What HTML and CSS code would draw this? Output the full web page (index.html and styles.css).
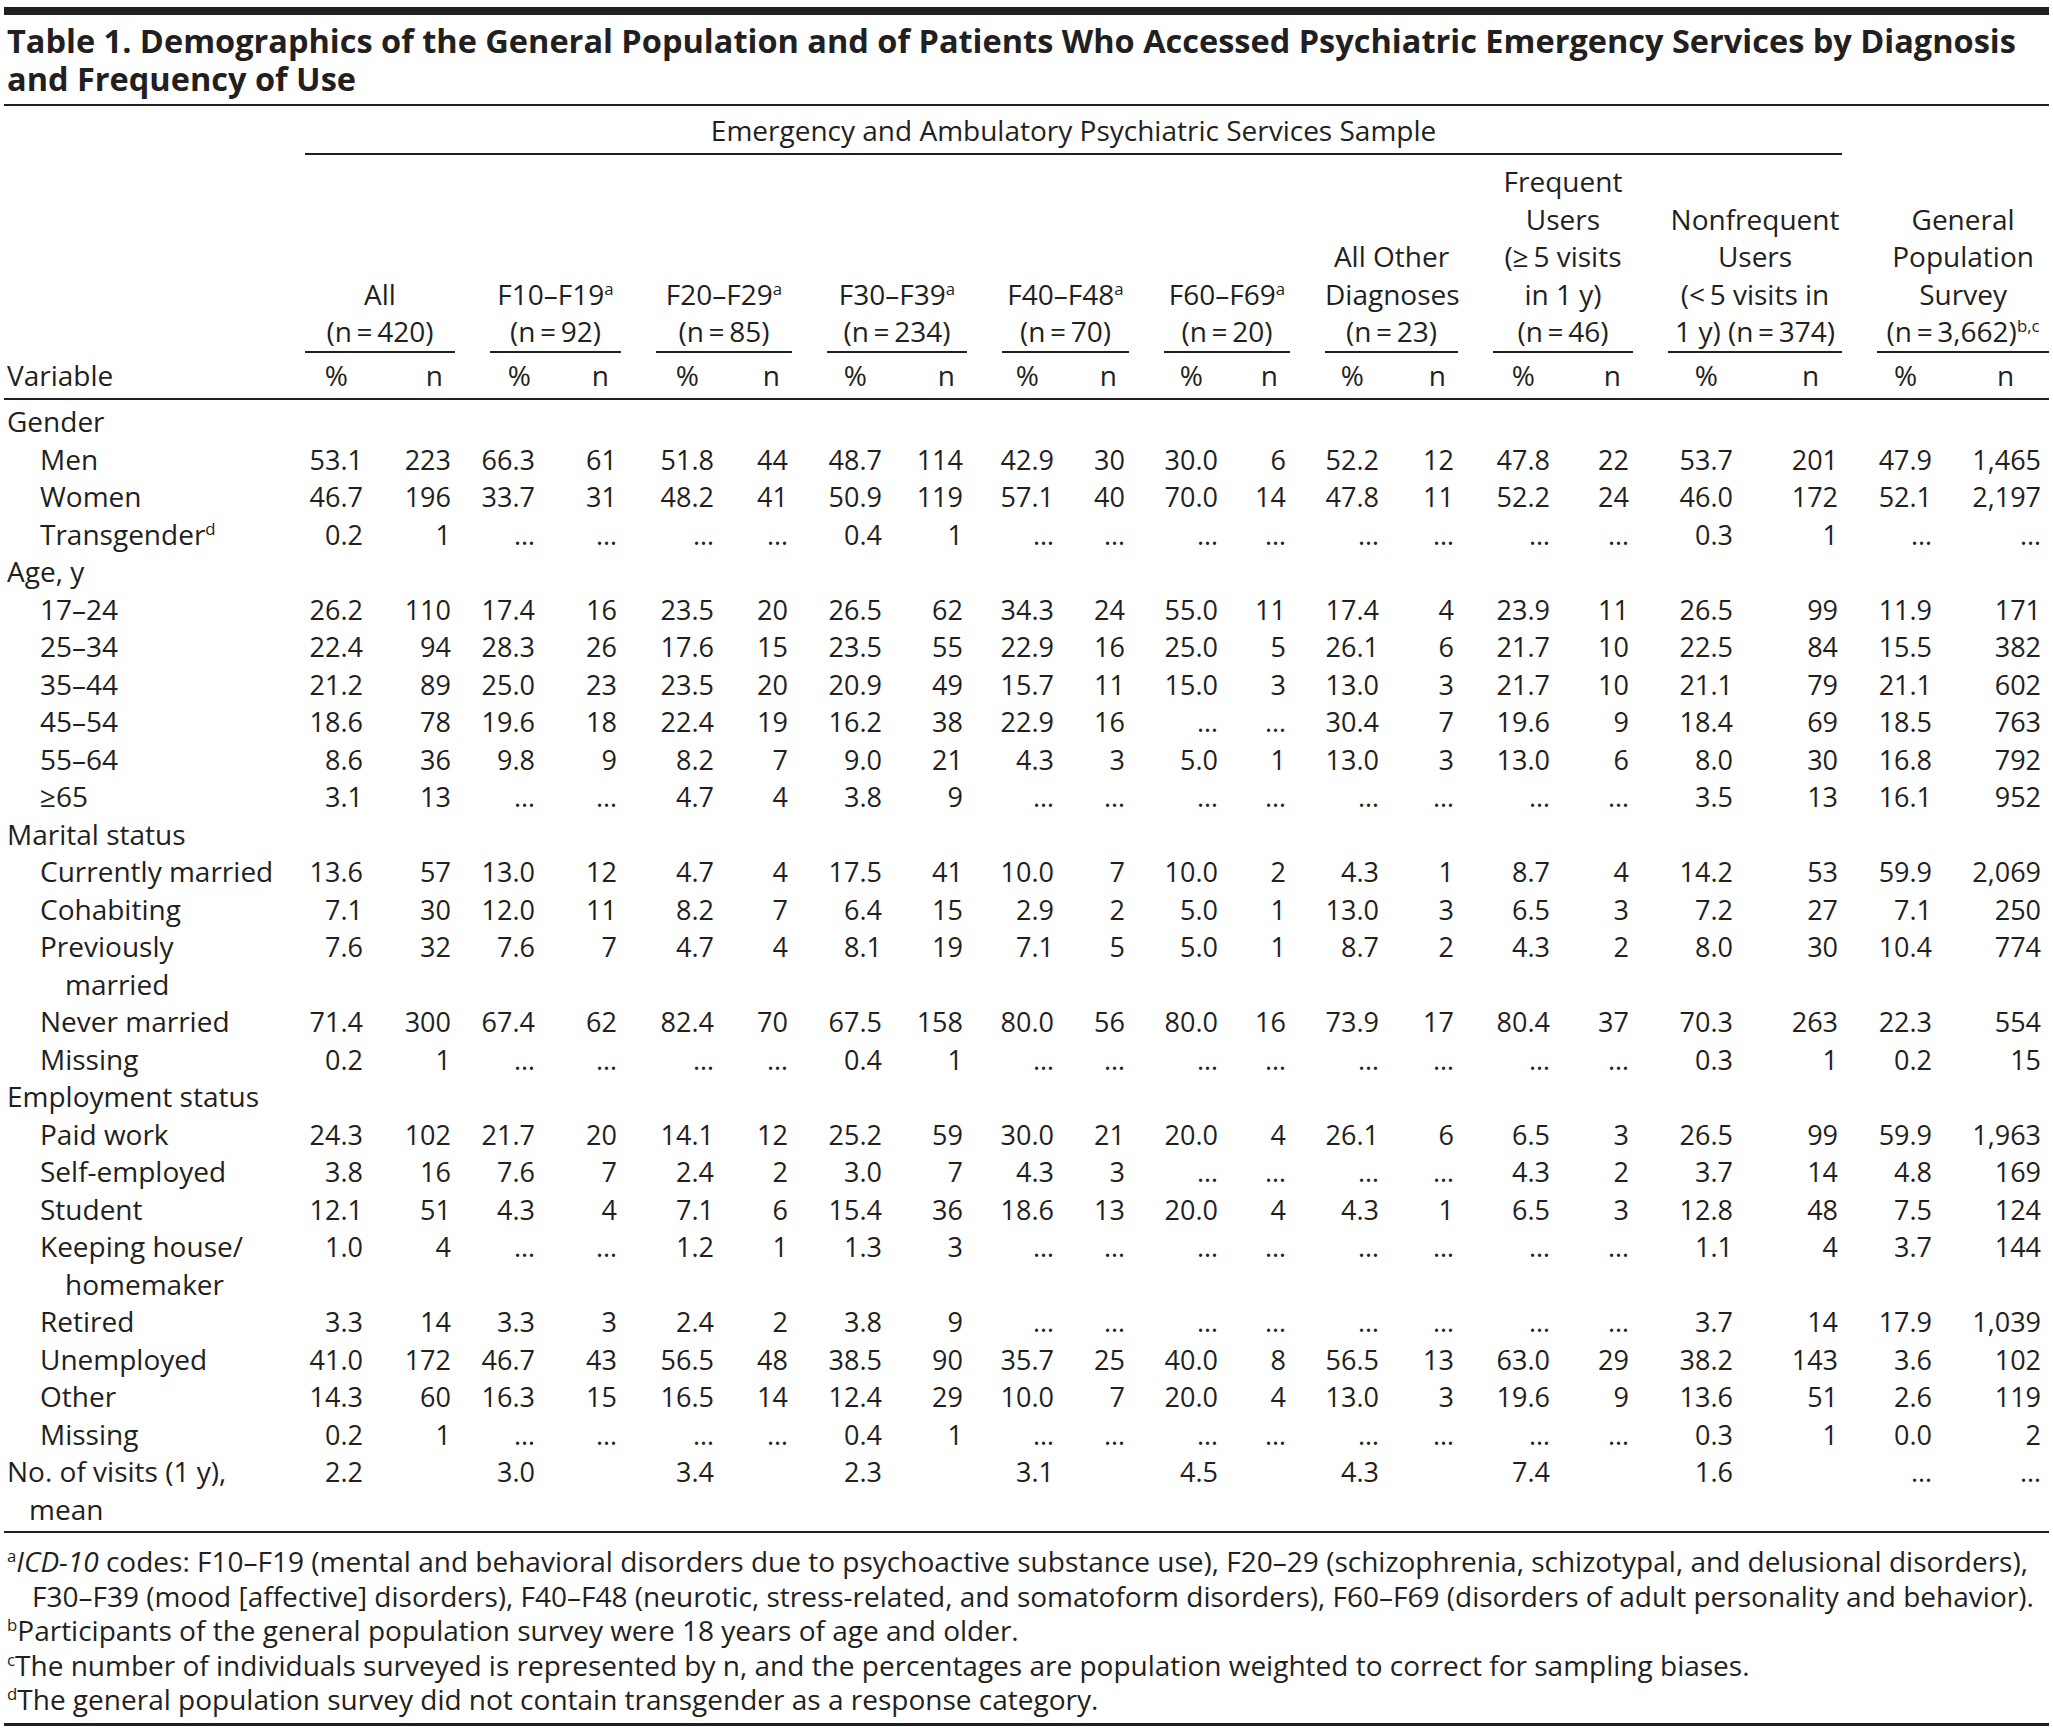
FILE: index.html
```html
<!DOCTYPE html>
<html lang="en">
<head>
<meta charset="utf-8">
<title>Table 1. Demographics</title>
<link rel="stylesheet" href="styles.css">
</head>
<body>
<div class="page">
  <div class="topbar"></div>
  <h1 class="title"><span class="tl">Table 1. Demographics of the General Population and of Patients Who Accessed Psychiatric Emergency Services by Diagnosis</span><span class="tl">and Frequency of Use</span></h1>
  <table class="data">
    <colgroup>
      <col class="c-l">
      <col class="c-p1"><col class="c-n1">
      <col class="c-p2"><col class="c-n2">
      <col class="c-p3"><col class="c-n3">
      <col class="c-p4"><col class="c-n4">
      <col class="c-p5"><col class="c-n5">
      <col class="c-p6"><col class="c-n6">
      <col class="c-p7"><col class="c-n7">
      <col class="c-p8"><col class="c-n8">
      <col class="c-p9"><col class="c-n9">
      <col class="c-p10"><col class="c-n10">
    </colgroup>
    <thead>
      <tr class="r-span">
        <th></th>
        <th colspan="18" class="span">Emergency and Ambulatory Psychiatric Services Sample</th>
        <th colspan="2"></th>
      </tr>
      <tr class="r-grp">
        <th></th>
        <th colspan="2" class="gh gh0"><div class="ghd">All<br>(n&#8201;=&#8201;420)</div></th>
        <th colspan="2" class="gh"><div class="ghd">F10–F19<sup>a</sup><br>(n&#8201;=&#8201;92)</div></th>
        <th colspan="2" class="gh"><div class="ghd">F20–F29<sup>a</sup><br>(n&#8201;=&#8201;85)</div></th>
        <th colspan="2" class="gh"><div class="ghd">F30–F39<sup>a</sup><br>(n&#8201;=&#8201;234)</div></th>
        <th colspan="2" class="gh"><div class="ghd">F40–F48<sup>a</sup><br>(n&#8201;=&#8201;70)</div></th>
        <th colspan="2" class="gh"><div class="ghd">F60–F69<sup>a</sup><br>(n&#8201;=&#8201;20)</div></th>
        <th colspan="2" class="gh"><div class="ghd">All Other<br>Diagnoses<br>(n&#8201;=&#8201;23)</div></th>
        <th colspan="2" class="gh"><div class="ghd">Frequent<br>Users<br>(≥&#8201;5 visits<br>in 1 y)<br>(n&#8201;=&#8201;46)</div></th>
        <th colspan="2" class="gh"><div class="ghd">Nonfrequent<br>Users<br>(&lt;&#8201;5 visits in<br>1 y) (n&#8201;=&#8201;374)</div></th>
        <th colspan="2" class="gh"><div class="ghd">General<br>Population<br>Survey<br>(n&#8201;=&#8201;3,662)<sup>b,c</sup></div></th>
      </tr>
      <tr class="r-var">
        <th class="vl">Variable</th>
        <th class="ph">%</th><th class="nh">n</th>
        <th class="ph ph2">%</th><th class="nh">n</th>
        <th class="ph">%</th><th class="nh">n</th>
        <th class="ph">%</th><th class="nh">n</th>
        <th class="ph">%</th><th class="nh">n</th>
        <th class="ph">%</th><th class="nh">n</th>
        <th class="ph">%</th><th class="nh">n</th>
        <th class="ph">%</th><th class="nh">n</th>
        <th class="ph">%</th><th class="nh nh9">n</th>
        <th class="ph">%</th><th class="nh nh10">n</th>
      </tr>
    </thead>
    <tbody>
      <tr class="first"><td class="l">Gender</td></tr>
      <tr><td class="l1">Men</td><td class="p">53.1</td><td class="n">223</td><td class="p">66.3</td><td class="n">61</td><td class="p">51.8</td><td class="n">44</td><td class="p">48.7</td><td class="n">114</td><td class="p">42.9</td><td class="n">30</td><td class="p">30.0</td><td class="n">6</td><td class="p">52.2</td><td class="n">12</td><td class="p">47.8</td><td class="n">22</td><td class="p">53.7</td><td class="n">201</td><td class="p">47.9</td><td class="n nl">1,465</td></tr>
      <tr><td class="l1">Women</td><td class="p">46.7</td><td class="n">196</td><td class="p">33.7</td><td class="n">31</td><td class="p">48.2</td><td class="n">41</td><td class="p">50.9</td><td class="n">119</td><td class="p">57.1</td><td class="n">40</td><td class="p">70.0</td><td class="n">14</td><td class="p">47.8</td><td class="n">11</td><td class="p">52.2</td><td class="n">24</td><td class="p">46.0</td><td class="n">172</td><td class="p">52.1</td><td class="n nl">2,197</td></tr>
      <tr><td class="l1">Transgender<sup>d</sup></td><td class="p">0.2</td><td class="n">1</td><td class="p">…</td><td class="n">…</td><td class="p">…</td><td class="n">…</td><td class="p">0.4</td><td class="n">1</td><td class="p">…</td><td class="n">…</td><td class="p">…</td><td class="n">…</td><td class="p">…</td><td class="n">…</td><td class="p">…</td><td class="n">…</td><td class="p">0.3</td><td class="n">1</td><td class="p">…</td><td class="n nl">…</td></tr>
      <tr><td class="l">Age, y</td></tr>
      <tr><td class="l1">17–24</td><td class="p">26.2</td><td class="n">110</td><td class="p">17.4</td><td class="n">16</td><td class="p">23.5</td><td class="n">20</td><td class="p">26.5</td><td class="n">62</td><td class="p">34.3</td><td class="n">24</td><td class="p">55.0</td><td class="n">11</td><td class="p">17.4</td><td class="n">4</td><td class="p">23.9</td><td class="n">11</td><td class="p">26.5</td><td class="n">99</td><td class="p">11.9</td><td class="n nl">171</td></tr>
      <tr><td class="l1">25–34</td><td class="p">22.4</td><td class="n">94</td><td class="p">28.3</td><td class="n">26</td><td class="p">17.6</td><td class="n">15</td><td class="p">23.5</td><td class="n">55</td><td class="p">22.9</td><td class="n">16</td><td class="p">25.0</td><td class="n">5</td><td class="p">26.1</td><td class="n">6</td><td class="p">21.7</td><td class="n">10</td><td class="p">22.5</td><td class="n">84</td><td class="p">15.5</td><td class="n nl">382</td></tr>
      <tr><td class="l1">35–44</td><td class="p">21.2</td><td class="n">89</td><td class="p">25.0</td><td class="n">23</td><td class="p">23.5</td><td class="n">20</td><td class="p">20.9</td><td class="n">49</td><td class="p">15.7</td><td class="n">11</td><td class="p">15.0</td><td class="n">3</td><td class="p">13.0</td><td class="n">3</td><td class="p">21.7</td><td class="n">10</td><td class="p">21.1</td><td class="n">79</td><td class="p">21.1</td><td class="n nl">602</td></tr>
      <tr><td class="l1">45–54</td><td class="p">18.6</td><td class="n">78</td><td class="p">19.6</td><td class="n">18</td><td class="p">22.4</td><td class="n">19</td><td class="p">16.2</td><td class="n">38</td><td class="p">22.9</td><td class="n">16</td><td class="p">…</td><td class="n">…</td><td class="p">30.4</td><td class="n">7</td><td class="p">19.6</td><td class="n">9</td><td class="p">18.4</td><td class="n">69</td><td class="p">18.5</td><td class="n nl">763</td></tr>
      <tr><td class="l1">55–64</td><td class="p">8.6</td><td class="n">36</td><td class="p">9.8</td><td class="n">9</td><td class="p">8.2</td><td class="n">7</td><td class="p">9.0</td><td class="n">21</td><td class="p">4.3</td><td class="n">3</td><td class="p">5.0</td><td class="n">1</td><td class="p">13.0</td><td class="n">3</td><td class="p">13.0</td><td class="n">6</td><td class="p">8.0</td><td class="n">30</td><td class="p">16.8</td><td class="n nl">792</td></tr>
      <tr><td class="l1">≥65</td><td class="p">3.1</td><td class="n">13</td><td class="p">…</td><td class="n">…</td><td class="p">4.7</td><td class="n">4</td><td class="p">3.8</td><td class="n">9</td><td class="p">…</td><td class="n">…</td><td class="p">…</td><td class="n">…</td><td class="p">…</td><td class="n">…</td><td class="p">…</td><td class="n">…</td><td class="p">3.5</td><td class="n">13</td><td class="p">16.1</td><td class="n nl">952</td></tr>
      <tr><td class="l">Marital status</td></tr>
      <tr><td class="l1">Currently married</td><td class="p">13.6</td><td class="n">57</td><td class="p">13.0</td><td class="n">12</td><td class="p">4.7</td><td class="n">4</td><td class="p">17.5</td><td class="n">41</td><td class="p">10.0</td><td class="n">7</td><td class="p">10.0</td><td class="n">2</td><td class="p">4.3</td><td class="n">1</td><td class="p">8.7</td><td class="n">4</td><td class="p">14.2</td><td class="n">53</td><td class="p">59.9</td><td class="n nl">2,069</td></tr>
      <tr><td class="l1">Cohabiting</td><td class="p">7.1</td><td class="n">30</td><td class="p">12.0</td><td class="n">11</td><td class="p">8.2</td><td class="n">7</td><td class="p">6.4</td><td class="n">15</td><td class="p">2.9</td><td class="n">2</td><td class="p">5.0</td><td class="n">1</td><td class="p">13.0</td><td class="n">3</td><td class="p">6.5</td><td class="n">3</td><td class="p">7.2</td><td class="n">27</td><td class="p">7.1</td><td class="n nl">250</td></tr>
      <tr><td class="l1 hang">Previously<br>married</td><td class="p">7.6</td><td class="n">32</td><td class="p">7.6</td><td class="n">7</td><td class="p">4.7</td><td class="n">4</td><td class="p">8.1</td><td class="n">19</td><td class="p">7.1</td><td class="n">5</td><td class="p">5.0</td><td class="n">1</td><td class="p">8.7</td><td class="n">2</td><td class="p">4.3</td><td class="n">2</td><td class="p">8.0</td><td class="n">30</td><td class="p">10.4</td><td class="n nl">774</td></tr>
      <tr><td class="l1">Never married</td><td class="p">71.4</td><td class="n">300</td><td class="p">67.4</td><td class="n">62</td><td class="p">82.4</td><td class="n">70</td><td class="p">67.5</td><td class="n">158</td><td class="p">80.0</td><td class="n">56</td><td class="p">80.0</td><td class="n">16</td><td class="p">73.9</td><td class="n">17</td><td class="p">80.4</td><td class="n">37</td><td class="p">70.3</td><td class="n">263</td><td class="p">22.3</td><td class="n nl">554</td></tr>
      <tr><td class="l1">Missing</td><td class="p">0.2</td><td class="n">1</td><td class="p">…</td><td class="n">…</td><td class="p">…</td><td class="n">…</td><td class="p">0.4</td><td class="n">1</td><td class="p">…</td><td class="n">…</td><td class="p">…</td><td class="n">…</td><td class="p">…</td><td class="n">…</td><td class="p">…</td><td class="n">…</td><td class="p">0.3</td><td class="n">1</td><td class="p">0.2</td><td class="n nl">15</td></tr>
      <tr><td class="l">Employment status</td></tr>
      <tr><td class="l1">Paid work</td><td class="p">24.3</td><td class="n">102</td><td class="p">21.7</td><td class="n">20</td><td class="p">14.1</td><td class="n">12</td><td class="p">25.2</td><td class="n">59</td><td class="p">30.0</td><td class="n">21</td><td class="p">20.0</td><td class="n">4</td><td class="p">26.1</td><td class="n">6</td><td class="p">6.5</td><td class="n">3</td><td class="p">26.5</td><td class="n">99</td><td class="p">59.9</td><td class="n nl">1,963</td></tr>
      <tr><td class="l1">Self-employed</td><td class="p">3.8</td><td class="n">16</td><td class="p">7.6</td><td class="n">7</td><td class="p">2.4</td><td class="n">2</td><td class="p">3.0</td><td class="n">7</td><td class="p">4.3</td><td class="n">3</td><td class="p">…</td><td class="n">…</td><td class="p">…</td><td class="n">…</td><td class="p">4.3</td><td class="n">2</td><td class="p">3.7</td><td class="n">14</td><td class="p">4.8</td><td class="n nl">169</td></tr>
      <tr><td class="l1">Student</td><td class="p">12.1</td><td class="n">51</td><td class="p">4.3</td><td class="n">4</td><td class="p">7.1</td><td class="n">6</td><td class="p">15.4</td><td class="n">36</td><td class="p">18.6</td><td class="n">13</td><td class="p">20.0</td><td class="n">4</td><td class="p">4.3</td><td class="n">1</td><td class="p">6.5</td><td class="n">3</td><td class="p">12.8</td><td class="n">48</td><td class="p">7.5</td><td class="n nl">124</td></tr>
      <tr><td class="l1 hang">Keeping house/<br>homemaker</td><td class="p">1.0</td><td class="n">4</td><td class="p">…</td><td class="n">…</td><td class="p">1.2</td><td class="n">1</td><td class="p">1.3</td><td class="n">3</td><td class="p">…</td><td class="n">…</td><td class="p">…</td><td class="n">…</td><td class="p">…</td><td class="n">…</td><td class="p">…</td><td class="n">…</td><td class="p">1.1</td><td class="n">4</td><td class="p">3.7</td><td class="n nl">144</td></tr>
      <tr><td class="l1">Retired</td><td class="p">3.3</td><td class="n">14</td><td class="p">3.3</td><td class="n">3</td><td class="p">2.4</td><td class="n">2</td><td class="p">3.8</td><td class="n">9</td><td class="p">…</td><td class="n">…</td><td class="p">…</td><td class="n">…</td><td class="p">…</td><td class="n">…</td><td class="p">…</td><td class="n">…</td><td class="p">3.7</td><td class="n">14</td><td class="p">17.9</td><td class="n nl">1,039</td></tr>
      <tr><td class="l1">Unemployed</td><td class="p">41.0</td><td class="n">172</td><td class="p">46.7</td><td class="n">43</td><td class="p">56.5</td><td class="n">48</td><td class="p">38.5</td><td class="n">90</td><td class="p">35.7</td><td class="n">25</td><td class="p">40.0</td><td class="n">8</td><td class="p">56.5</td><td class="n">13</td><td class="p">63.0</td><td class="n">29</td><td class="p">38.2</td><td class="n">143</td><td class="p">3.6</td><td class="n nl">102</td></tr>
      <tr><td class="l1">Other</td><td class="p">14.3</td><td class="n">60</td><td class="p">16.3</td><td class="n">15</td><td class="p">16.5</td><td class="n">14</td><td class="p">12.4</td><td class="n">29</td><td class="p">10.0</td><td class="n">7</td><td class="p">20.0</td><td class="n">4</td><td class="p">13.0</td><td class="n">3</td><td class="p">19.6</td><td class="n">9</td><td class="p">13.6</td><td class="n">51</td><td class="p">2.6</td><td class="n nl">119</td></tr>
      <tr><td class="l1">Missing</td><td class="p">0.2</td><td class="n">1</td><td class="p">…</td><td class="n">…</td><td class="p">…</td><td class="n">…</td><td class="p">0.4</td><td class="n">1</td><td class="p">…</td><td class="n">…</td><td class="p">…</td><td class="n">…</td><td class="p">…</td><td class="n">…</td><td class="p">…</td><td class="n">…</td><td class="p">0.3</td><td class="n">1</td><td class="p">0.0</td><td class="n nl">2</td></tr>
      <tr class="last"><td class="l hang">No. of visits (1 y),<br>mean</td><td class="p">2.2</td><td class="n"></td><td class="p">3.0</td><td class="n"></td><td class="p">3.4</td><td class="n"></td><td class="p">2.3</td><td class="n"></td><td class="p">3.1</td><td class="n"></td><td class="p">4.5</td><td class="n"></td><td class="p">4.3</td><td class="n"></td><td class="p">7.4</td><td class="n"></td><td class="p">1.6</td><td class="n"></td><td class="p">…</td><td class="n nl">…</td></tr>
    </tbody>
  </table>
  <div class="notes">
    <p class="note"><sup>a</sup><i>ICD-10</i> codes: F10–F19 (mental and behavioral disorders due to psychoactive substance use), F20–29 (schizophrenia, schizotypal, and delusional disorders),<br>F30–F39 (mood [affective] disorders), F40–F48 (neurotic, stress-related, and somatoform disorders), F60–F69 (disorders of adult personality and behavior).</p>
    <p class="note"><sup>b</sup>Participants of the general population survey were 18 years of age and older.</p>
    <p class="note"><sup>c</sup>The number of individuals surveyed is represented by n, and the percentages are population weighted to correct for sampling biases.</p>
    <p class="note"><sup>d</sup>The general population survey did not contain transgender as a response category.</p>
  </div>
</div>
</body>
</html>
```

FILE: styles.css
```css
html, body {
  margin: 0;
  padding: 0;
  background: #ffffff;
}

body {
  font-family: "Open Sans", "Liberation Sans", sans-serif;
  font-size: 28px;
  color: #231f20;
}

.page {
  width: 2045px;
  margin: 0 4px;
}

.topbar {
  margin-top: 7px;
  height: 8px;
  background: #231f20;
}

.title {
  margin: 7px 0 0;
  padding: 0 0 6px 3px;
  font-size: 32.5px;
  font-weight: 700;
  line-height: 38px;
  white-space: nowrap;
  border-bottom: 2px solid #231f20;
}

.title .tl {
  display: block;
  height: 38px;
}

sup {
  font-size: 0.6em;
  line-height: 0;
  vertical-align: 0.62em;
}

table.data {
  width: 2045px;
  table-layout: fixed;
  border-collapse: separate;
  border-spacing: 0;
}

th,
td {
  padding: 0;
  font-weight: normal;
  white-space: nowrap;
  vertical-align: top;
}

.c-l { width: 301px; }
.c-p1 { width: 66px; }  .c-n1 { width: 84px; }
.c-p2 { width: 88px; }  .c-n2 { width: 78px; }
.c-p3 { width: 101px; } .c-n3 { width: 70px; }
.c-p4 { width: 98px; }  .c-n4 { width: 77px; }
.c-p5 { width: 95px; }  .c-n5 { width: 67px; }
.c-p6 { width: 97px; }  .c-n6 { width: 64px; }
.c-p7 { width: 97px; }  .c-n7 { width: 71px; }
.c-p8 { width: 100px; } .c-n8 { width: 75px; }
.c-p9 { width: 108px; } .c-n9 { width: 101px; }
.c-p10 { width: 98px; } .c-n10 { width: 109px; }

/* header rows */
.r-span th {
  line-height: 37.5px;
  padding-top: 6px;
  padding-bottom: 3.5px;
}

.r-span th.span {
  text-align: center;
  border-bottom: 2px solid #231f20;
}

.r-grp th {
  vertical-align: bottom;
  line-height: 37.5px;
  padding-top: 8px;
}

.r-grp th.gh {
  text-align: center;
  padding-left: 35px;
}

.r-grp th.gh0 {
  padding-left: 0;
}

.ghd {
  border-bottom: 2px solid #231f20;
}

.r-var th {
  line-height: 37.5px;
  padding-top: 4.5px;
  padding-bottom: 3px;
  border-bottom: 2px solid #231f20;
}

.r-var th.vl {
  text-align: left;
  padding-left: 3px;
}

.r-var th.ph {
  text-align: right;
  padding-right: 23px;
}

.r-var th.ph2 { padding-right: 12px; }

.r-var th.nh {
  text-align: right;
  padding-right: 12px;
}

.r-var th.nh9 { padding-right: 23px; }
.r-var th.nh10 { padding-right: 35px; }

/* body rows */
tbody td {
  line-height: 37.5px;
}

tbody tr.first td {
  padding-top: 3.5px;
}

tbody tr.last td {
  padding-bottom: 3px;
}

td.l { padding-left: 3px; }
td.l1 { padding-left: 36px; }
td.l.hang { padding-left: 25px; text-indent: -22px; }
td.l1.hang { padding-left: 61px; text-indent: -25px; }

td.p {
  font-size: 27px;
  text-align: right;
  padding-right: 8px;
}

td.n {
  font-size: 27px;
  text-align: right;
  padding-right: 4px;
}

td.n.nl {
  padding-right: 8px;
}

/* footnotes */
.notes {
  border-top: 2px solid #231f20;
  border-bottom: 3px solid #231f20;
  padding: 11px 0 6px;
}

.note {
  margin: 0;
  font-size: 28px;
  line-height: 34.6px;
  padding-left: 28px;
  text-indent: -25px;
  white-space: nowrap;
}

.note sup {
  font-size: 0.6em;
}
```
